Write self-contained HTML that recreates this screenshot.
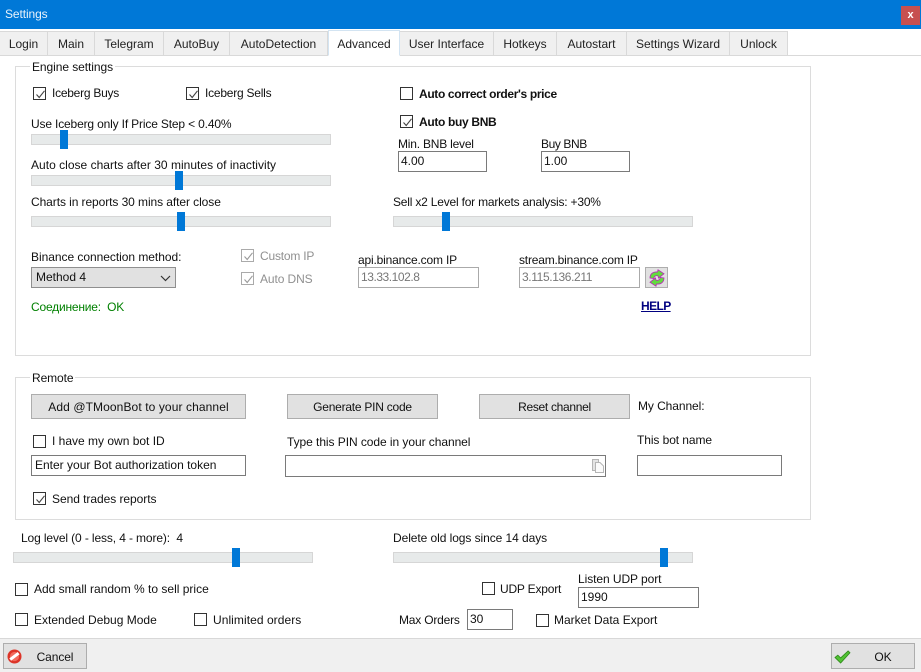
<!DOCTYPE html>
<html><head><meta charset="utf-8"><title>Settings</title>
<style>
html,body{margin:0;padding:0;background:#fff}
#r{position:relative;width:921px;height:672px;overflow:hidden;background:#fff;font:12px/16px "Liberation Sans",sans-serif;color:#111}
#r div,#r span.t{position:absolute;box-sizing:border-box}
.t{white-space:nowrap;line-height:16px;height:16px}
.tab{top:31px;height:25px;background:#f0f0f0;border:1px solid #d9d9d9;border-left:0;text-align:center;line-height:24px;color:#222}
.gb{border:1px solid #dcdcdc}
.cb{width:13px;height:13px;border:1px solid #333;background:#fff}
.cb svg{position:absolute;left:1px;top:1px}
.cb.d{border-color:#aaa}
.tr{width:300px;height:11px;background:#e7eaea;border:1px solid #d6d6d6}
.th{width:8px;height:19px;background:#0078d7}
.btn{background:#e1e1e1;border:1px solid #adadad;text-align:center;color:#111}
.in{background:#fff;border:1px solid #7a7a7a;padding-left:2px;line-height:19px;height:21px}
.in.d{border-color:#aaa;color:#777}
.b{font-weight:bold}
.g{color:#909090}
</style></head><body><div id="r">
<div style="left:0;top:0;width:921px;height:29px;background:#0078d7"></div>
<span class="t" style="left:5px;top:6px;color:#e8f2fb;letter-spacing:-.1px">Settings</span>
<div style="left:901px;top:6px;width:19px;height:19px;background:#c75050;color:#fff;text-align:center;font-weight:bold;font-size:11px;line-height:18px">x</div>

<div style="left:0;top:55px;width:921px;height:1px;background:#d9d9d9"></div>
<div class="tab" style="left:0;width:48px">Login</div>
<div class="tab" style="left:48px;width:47px">Main</div>
<div class="tab" style="left:95px;width:69px">Telegram</div>
<div class="tab" style="left:164px;width:66px">AutoBuy</div>
<div class="tab" style="left:230px;width:98px">AutoDetection</div>
<div class="tab" style="left:328px;top:30px;width:72px;height:26px;background:#fff;border:1px solid #d3e4f2;border-bottom:1px solid #fff;line-height:27px">Advanced</div>
<div class="tab" style="left:400px;width:94px">User Interface</div>
<div class="tab" style="left:494px;width:63px">Hotkeys</div>
<div class="tab" style="left:557px;width:70px">Autostart</div>
<div class="tab" style="left:627px;width:103px">Settings Wizard</div>
<div class="tab" style="left:730px;width:58px">Unlock</div>

<div class="gb" style="left:15px;top:66px;width:796px;height:290px"></div>
<span class="t" style="left:30px;top:59px;background:#fff;padding:0 2px;letter-spacing:-.07px">Engine settings</span>

<div class="cb" style="left:33px;top:87px"><svg width="11" height="11"><path d="M1.5 5.5L4.2 8.5L9.5 1.8" fill="none" stroke="#444" stroke-width="1.1"/></svg></div>
<span class="t" style="left:52px;top:85px;letter-spacing:-.25px">Iceberg Buys</span>
<div class="cb" style="left:186px;top:87px"><svg width="11" height="11"><path d="M1.5 5.5L4.2 8.5L9.5 1.8" fill="none" stroke="#444" stroke-width="1.1"/></svg></div>
<span class="t" style="left:205px;top:85px;letter-spacing:-.23px">Iceberg Sells</span>
<div class="cb" style="left:400px;top:87px"></div>
<span class="t b" style="left:419px;top:86px;letter-spacing:-.35px">Auto correct order's price</span>
<div class="cb" style="left:400px;top:115px"><svg width="11" height="11"><path d="M1.5 5.5L4.2 8.5L9.5 1.8" fill="none" stroke="#444" stroke-width="1.1"/></svg></div>
<span class="t b" style="left:419px;top:114px;letter-spacing:-.33px">Auto buy BNB</span>

<span class="t" style="left:31px;top:116px;letter-spacing:-.16px">Use Iceberg only If Price Step &lt; 0.40%</span>
<div class="tr" style="left:31px;top:134px"></div><div class="th" style="left:60px;top:130px"></div>
<span class="t" style="left:31px;top:157px;letter-spacing:.02px">Auto close charts after 30 minutes of inactivity</span>
<div class="tr" style="left:31px;top:175px"></div><div class="th" style="left:175px;top:171px"></div>
<span class="t" style="left:31px;top:194px;letter-spacing:-.08px">Charts in reports 30 mins after close</span>
<div class="tr" style="left:31px;top:216px"></div><div class="th" style="left:177px;top:212px"></div>
<span class="t" style="left:393px;top:194px;letter-spacing:-.2px">Sell x2 Level for markets analysis: +30%</span>
<div class="tr" style="left:393px;top:216px"></div><div class="th" style="left:442px;top:212px"></div>

<span class="t" style="left:398px;top:136px;letter-spacing:-.21px">Min. BNB level</span>
<div class="in" style="left:398px;top:151px;width:89px">4.00</div>
<span class="t" style="left:541px;top:136px;letter-spacing:-.4px">Buy BNB</span>
<div class="in" style="left:541px;top:151px;width:89px">1.00</div>

<span class="t" style="left:31px;top:249px;letter-spacing:-.04px">Binance connection method:</span>
<div class="btn" style="left:31px;top:267px;width:145px;height:21px;text-align:left;padding-left:4px;line-height:19px;border-color:#8f8f8f">Method 4
<svg style="position:absolute;left:128px;top:7px" width="11" height="7"><path d="M1 1L5.5 5.5L10 1" fill="none" stroke="#333" stroke-width="1.2"/></svg></div>
<div class="cb d" style="left:241px;top:249px"><svg width="11" height="11"><path d="M1.5 5.5L4.2 8.5L9.5 1.8" fill="none" stroke="#999" stroke-width="1.1"/></svg></div>
<span class="t g" style="left:260px;top:248px;letter-spacing:-.2px">Custom IP</span>
<div class="cb d" style="left:241px;top:272px"><svg width="11" height="11"><path d="M1.5 5.5L4.2 8.5L9.5 1.8" fill="none" stroke="#999" stroke-width="1.1"/></svg></div>
<span class="t g" style="left:260px;top:271px;letter-spacing:-.1px">Auto DNS</span>
<span class="t" style="left:358px;top:252px;letter-spacing:-.17px">api.binance.com IP</span>
<div class="in d" style="left:358px;top:267px;width:121px;letter-spacing:-.45px">13.33.102.8</div>
<span class="t" style="left:519px;top:252px;letter-spacing:-.19px">stream.binance.com IP</span>
<div class="in d" style="left:519px;top:267px;width:121px;letter-spacing:-.38px">3.115.136.211</div>
<div class="btn" style="left:645px;top:267px;width:23px;height:21px">
<svg style="position:absolute;left:3px;top:1px" width="16" height="18" viewBox="0 0 16 18"><path d="M1 9C1 4.5 4.5 2.5 8.5 3L9 .8L15 4.8L9.5 9L9 6.8C6.5 6.2 5 7.5 4.8 9.5Z" fill="#62dc3e" stroke="#b828b8" stroke-width=".8"/><path d="M15 9C15 13.5 11.5 15.5 7.5 15L7 17.2L1 13.2L6.5 9L7 11.2C9.5 11.8 11 10.5 11.2 8.5Z" fill="#62dc3e" stroke="#b828b8" stroke-width=".8"/></svg></div>
<span class="t b" style="left:641px;top:298px;color:#000080;text-decoration:underline;letter-spacing:-.6px">HELP</span>
<span class="t" style="left:31px;top:299px;color:#008000;letter-spacing:-.2px">Соединение:&nbsp; OK</span>

<div class="gb" style="left:15px;top:377px;width:796px;height:143px"></div>
<span class="t" style="left:30px;top:370px;background:#fff;padding:0 2px;letter-spacing:-.1px">Remote</span>
<div class="btn" style="left:31px;top:394px;width:215px;height:25px;line-height:24px;letter-spacing:.1px">Add @TMoonBot to your channel</div>
<div class="btn" style="left:287px;top:394px;width:151px;height:25px;line-height:24px;letter-spacing:-.24px">Generate PIN code</div>
<div class="btn" style="left:479px;top:394px;width:151px;height:25px;line-height:24px;letter-spacing:-.3px">Reset channel</div>
<span class="t" style="left:638px;top:398px;letter-spacing:-.08px">My Channel:</span>
<div class="cb" style="left:33px;top:435px"></div>
<span class="t" style="left:52px;top:433px">I have my own bot ID</span>
<div class="in" style="left:31px;top:455px;width:215px;padding-left:3px">Enter your Bot authorization token</div>
<span class="t" style="left:287px;top:434px;letter-spacing:-.06px">Type this PIN code in your channel</span>
<div class="in" style="left:285px;top:455px;width:321px;height:22px"></div>
<svg style="position:absolute;left:592px;top:459px" width="12" height="14"><path d="M0.5 0.5H6.5V11.5H0.5Z" fill="#e4e4e4" stroke="#b5b5b5"/><path d="M3.5 3.5H8L11.5 7V13.5H3.5Z" fill="#fbfbfb" stroke="#b5b5b5"/></svg>
<span class="t" style="left:637px;top:432px;letter-spacing:-.08px">This bot name</span>
<div class="in" style="left:637px;top:455px;width:145px"></div>
<div class="cb" style="left:33px;top:492px"><svg width="11" height="11"><path d="M1.5 5.5L4.2 8.5L9.5 1.8" fill="none" stroke="#444" stroke-width="1.1"/></svg></div>
<span class="t" style="left:52px;top:491px;letter-spacing:-.05px">Send trades reports</span>

<span class="t" style="left:21px;top:530px;letter-spacing:-.12px">Log level (0 - less, 4 - more):&nbsp; 4</span>
<div class="tr" style="left:13px;top:552px"></div><div class="th" style="left:232px;top:548px"></div>
<span class="t" style="left:393px;top:530px;letter-spacing:-.07px">Delete old logs since 14 days</span>
<div class="tr" style="left:393px;top:552px"></div><div class="th" style="left:660px;top:548px"></div>

<div class="cb" style="left:15px;top:583px"></div>
<span class="t" style="left:34px;top:581px">Add small random % to sell price</span>
<div class="cb" style="left:15px;top:613px"></div>
<span class="t" style="left:34px;top:612px">Extended Debug Mode</span>
<div class="cb" style="left:194px;top:613px"></div>
<span class="t" style="left:213px;top:612px;letter-spacing:.06px">Unlimited orders</span>
<div class="cb" style="left:482px;top:582px"></div>
<span class="t" style="left:500px;top:581px;letter-spacing:-.2px">UDP Export</span>
<span class="t" style="left:578px;top:571px;letter-spacing:-.07px">Listen UDP port</span>
<div class="in" style="left:578px;top:587px;width:121px">1990</div>
<span class="t" style="left:399px;top:612px;letter-spacing:-.2px">Max Orders</span>
<div class="in" style="left:467px;top:609px;width:46px">30</div>
<div class="cb" style="left:536px;top:614px"></div>
<span class="t" style="left:554px;top:612px">Market Data Export</span>

<div style="left:0;top:638px;width:921px;height:34px;background:#f0f0f0;border-top:1px solid #d8d8d8"></div>
<div class="btn" style="left:3px;top:643px;width:84px;height:26px;line-height:26px;padding-left:20px;letter-spacing:-.1px">Cancel</div>
<svg style="position:absolute;left:7px;top:649px" width="15" height="15" viewBox="0 0 15 15"><circle cx="7.5" cy="7.5" r="7" fill="#dc3428"/><circle cx="7.5" cy="7.5" r="4.6" fill="#f26a5c"/><path d="M3.2 10.6L11.6 4.2" stroke="#fff" stroke-width="3"/></svg>
<div class="btn" style="left:831px;top:643px;width:84px;height:26px;line-height:26px;padding-left:20px">OK</div>
<svg style="position:absolute;left:834px;top:650px" width="17" height="14" viewBox="0 0 18 15"><path d="M1 8L4 5.5L7 8.5L15 1L17 3L7 14Z" fill="#52c234" stroke="#2e8a1a" stroke-width="0.9"/></svg>
</div></body></html>
